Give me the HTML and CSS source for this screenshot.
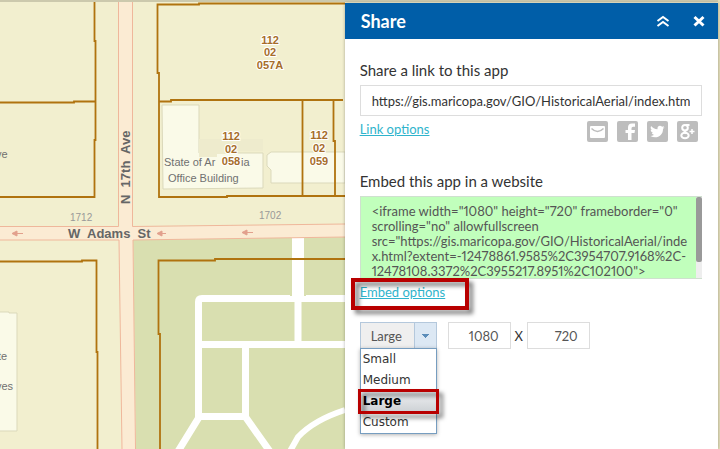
FILE: index.html
```html
<!DOCTYPE html>
<html lang="en">
<head>
<meta charset="utf-8">
<title>Historical Aerial</title>
<link rel="stylesheet" href="styles.css">
</head>
<body>
<main class="viewer">
  <svg class="map" viewBox="0 0 720 449" preserveAspectRatio="xMidYMid slice" role="img" aria-label="Parcel map">
    <rect width="720" height="449" fill="#f2efcf"/>
    <path d="M133 240L345 237V449H136Z" fill="#d9dfb0"/>
    <g fill="#fafae8" stroke="#dbd9bb" stroke-width="1">
      <path d="M162 105h37v48h64v35l-100 1z"/>
      <path d="M199 153v4h18v-3h18v-3h28v-12H199z" fill="#eeebcd" stroke="none"/>
      <path d="M271 152h74v31h-74v-13l-4-4v-11z"/>
      <path d="M-1 312h10v1h8v118H-1z"/>
    </g>
    <g fill="none" stroke="#fff" stroke-width="7">
      <path d="M298 237V299M345 298.500H202Q198.500 298.500 198.500 302V418L177 453M199 344.500H345M298 298V344M245.500 345V417L271 453M199 416.500H246"/>
      <path d="M345 410Q314 420 298 437L289 453" stroke-width="6"/>
    </g>
    <rect x="291" y="237" width="14" height="60" fill="#fff"/>
    <path d="M291 238v58M305 238v58" stroke="#d9dfb0" stroke-width="2"/>
    <g fill="#fbebd3">
      <path d="M118.500 0H132V449H121Z"/>
      <path d="M0 227H132L345 224V237L132 240H0Z"/>
      <path d="M119 240H133L135.500 449H122Z"/>
    </g>
    <g fill="none" stroke="#efb79b">
      <path d="M118.500 0V226.500H0M132.500 0V226.500L345 224M0 240H119L122 449M345 237L133 240L135.500 449"/>
    </g>
    <g fill="none" stroke="#b0730f" stroke-width="1.800">
      <path d="M94.500 0V41H95.500V140H94.500V197H0M0 102.500H74V101.500H95"/>
      <path d="M345 3.500H199V4.500H157.500V73H159V197H227V196H345M159 101.500H171V100H343M302.500 100V196M333.500 100V141H335V196"/>
      <path d="M0 261.500H82V260.500H96.500V352H97.500V449"/>
      <path d="M345 259H215V260.500H158.500V334H160V449"/>
    </g>
    <g fill="#e2a08c" stroke="#e2a08c">
      <path d="M13 233.500H23M17 231v5l-5-2.500z"/>
      <path d="M158 233.500H166M162 231v5l-5-2.500z"/>
      <path d="M244 232.500H253M247 230v5l-5-2.500z"/>
    </g>
    <g class="place">
      <text x="164" y="166">State of Ar</text><text x="241" y="166">ia</text>
      <text x="168" y="182">Office Building</text>
      <text x="-4" y="158">ve</text><text x="-2" y="360">te</text><text x="-4" y="390">ves</text>
    </g>
    <g class="parcel">
      <text x="270" y="44">112</text><text x="270" y="56">02</text><text x="270" y="69">057A</text>
      <text x="319" y="139">112</text><text x="319" y="152">02</text><text x="319" y="165">059</text>
      <text x="231" y="140">112</text><text x="231" y="153">02</text><text x="231" y="165">058</text>
    </g>
    <g class="number"><text x="70" y="221">1712</text><text x="259" y="219">1702</text></g>
    <g class="street"><text x="68" y="238">W&#160; Adams&#160; St</text><text transform="translate(130 204) rotate(-90)">N&#160; 17th&#160; Ave</text></g>
    <rect width="720" height="2" fill="#ccc9ad"/>
    <path d="M719 0V449" stroke="#e3deba" stroke-width="2"/>
  </svg>

  <section class="panel" aria-labelledby="title">
    <header class="bar">
      <h1 id="title" class="title">Share</h1>
      <button class="tool" type="button" aria-label="Collapse">
        <svg viewBox="0 0 14 14"><path d="M1.500 7L7 3l5.500 4M1.500 12L7 8l5.500 4"/></svg>
      </button>
      <button class="tool" type="button" aria-label="Close">
        <svg class="cross" viewBox="0 0 14 14"><path d="M2.500 3l9 8.500M11.500 3l-9 8.500"/></svg>
      </button>
    </header>

    <div class="body">
      <label class="label" for="link">Share a link to this app</label>
      <input class="field link-field" id="link" type="text" value="https://gis.maricopa.gov/GIO/HistoricalAerial/index.html">
      <div class="row">
        <a class="options" href="#link">Link options</a>
        <div class="social">
          <button type="button" aria-label="Email"><svg viewBox="0 0 21 21"><rect width="21" height="21" rx="2" fill="#bdbdbd"/><rect x="3" y="5" width="15" height="12" rx="1" fill="#fff"/><path d="M4.500 7.500Q10.500 13.500 16.500 7.500" fill="none" stroke="#bdbdbd" stroke-width="1.500"/></svg></button>
          <button type="button" aria-label="Facebook"><svg viewBox="0 0 21 21"><rect width="21" height="21" rx="2" fill="#bdbdbd"/><path d="M11 19v-7H8.500V9H11V6.500Q11 2.500 15 2.500h3v3.200h-2q-1.500 0-1.500 1.500V9H18l-.5 3h-3v7z" fill="#fff"/></svg></button>
          <button type="button" aria-label="Twitter"><svg viewBox="0 0 21 21"><rect width="21" height="21" rx="2" fill="#bdbdbd"/><path d="M17.500 6.200l-1.600.5 1.200-1.600-1.900.7C12.700 3.600 10 5.500 10.500 8.200 7.800 8.100 5.600 6.900 4.100 5c-.9 1.600-.3 3.200.8 4.100l-1.200-.3c0 1.500 1 2.600 2.300 3l-1.200.1c.4 1.100 1.400 1.700 2.600 1.900-1.200.9-2.500 1.200-4 1.100 6 3.500 12.800-.2 12.600-7z" fill="#fff"/></svg></button>
          <button type="button" aria-label="Google Plus"><svg viewBox="0 0 21 21"><rect width="21" height="21" rx="2" fill="#bdbdbd"/><g fill="none" stroke="#fff" stroke-width="2"><ellipse cx="8" cy="6.800" rx="2.800" ry="2.800"/><path d="M9 4h3.500M9 9.500Q6 11 9 12.200"/><ellipse cx="8" cy="14.500" rx="3.700" ry="2.700"/><path d="M12.500 10.500h5M15 8v5" stroke-width="1.500"/></g></svg></button>
        </div>
      </div>

      <label class="label second" for="code">Embed this app in a website</label>
      <div class="code-box">
        <textarea class="field code" id="code" wrap="off" spellcheck="false">&lt;iframe width="1080" height="720" frameborder="0"
scrolling="no" allowfullscreen
src="https://gis.maricopa.gov/GIO/HistoricalAerial/inde
x.html?extent=-12478861.9585%2C3954707.9168%2C-
12478108.3372%2C3955217.8951%2C102100"&gt;
&lt;/iframe&gt;</textarea>
        <div class="track"><div class="thumb"></div></div>
      </div>
      <div class="row">
        <a class="options marked" href="#code">Embed options</a>
      </div>

      <div class="sizes">
        <div class="picker">
          <select class="size" aria-label="Size">
            <option>Small</option><option>Medium</option><option selected>Large</option><option>Custom</option>
          </select>
          <ul class="menu" role="listbox" aria-label="Sizes">
            <li role="option">Small</li>
            <li role="option">Medium</li>
            <li role="option" class="chosen marked" aria-selected="true">Large</li>
            <li role="option">Custom</li>
          </ul>
        </div>
        <input class="field number-field" type="text" value="1080" aria-label="Width">
        <span class="times">X</span>
        <input class="field number-field" type="text" value="720" aria-label="Height">
      </div>
    </div>
  </section>
</main>
</body>
</html>
```
FILE: styles.css
```css
* { box-sizing: border-box; }

body {
  margin: 0;
  font-family: Lato, sans-serif;
  font-variant-numeric: proportional-nums;
  color: #333;
}

.viewer {
  position: relative;
  display: flex;
  justify-content: flex-end;
  min-height: 100vh;
  padding: 3px 2px 0 0;
  overflow: hidden;
}

.map {
  position: absolute;
  inset: 0;
  width: 100%;
  height: 100%;
}

.map text { font-family: "Liberation Sans", sans-serif; }

.parcel text {
  font-size: 11px;
  font-weight: bold;
  text-anchor: middle;
  fill: #a66d2a;
  stroke: #fff;
  stroke-width: 2px;
  paint-order: stroke;
}

.place text { font-size: 11px; fill: #707070; }
.number text { font-size: 10px; fill: #999; }

.street text {
  font-size: 13px;
  font-weight: bold;
  fill: #666;
}

.panel {
  position: relative;
  width: 52%;
  background: #fff;
  box-shadow: 0 0 3px rgba(0, 0, 0, 0.3);
}

.bar {
  display: flex;
  align-items: center;
  gap: 22px;
  height: 36px;
  padding: 0 12px 0 16px;
  background: #005ea8;
  color: #fff;
}

.title {
  flex: 1;
  margin: 0;
  font-size: 18px;
  line-height: 24px;
}

button {
  padding: 0;
  border: 0;
  background: none;
}

.tool { width: 14px; height: 14px; }

.tool svg {
  display: block;
  fill: none;
  stroke: #fff;
  stroke-width: 2;
}

.tool .cross { stroke-width: 3; }

.body { padding: 20px 16px 16px 15px; }

.label {
  display: block;
  margin-bottom: 4px;
  font-size: 15px;
  line-height: 22px;
}

.second { margin-top: 28px; }

.field {
  display: block;
  border: 1px solid #ddd;
  border-radius: 0;
  outline: 0;
  background: #fff;
  font-family: inherit;
  font-size: 13px;
  font-variant-numeric: inherit;
  color: #333;
}

.link-field {
  width: 100%;
  height: 31px;
  padding: 0 11px;
}

.row {
  display: flex;
  justify-content: space-between;
  padding-top: 5px;
}

.options {
  font-size: 13px;
  line-height: 16px;
  color: #2fb4cc;
}

.social {
  display: flex;
  gap: 9px;
  padding-right: 4px;
}

.social svg {
  display: block;
  width: 21px;
  height: 21px;
}

.code-box { position: relative; }

.code {
  width: 100%;
  height: 83px;
  padding: 7px 6px 7px 11px;
  border-color: #cfe0cf;
  background: #c1ffbc;
  color: #555;
  line-height: 15px;
  resize: none;
  overflow: hidden;
}

.track {
  position: absolute;
  top: 1px;
  right: 0;
  bottom: 1px;
  width: 6px;
  background: #eee;
}

.thumb {
  height: 80%;
  border-radius: 2px;
  background: #999;
}

.marked { position: relative; }

.marked::after {
  content: "";
  position: absolute;
  inset: -6px -24px -10px -9px;
  border: 4px solid #b80000;
  filter: drop-shadow(4px 4px 2px rgba(0, 0, 0, 0.5));
}

.sizes {
  display: flex;
  align-items: center;
  margin-top: 22px;
}

.picker {
  position: relative;
  width: 77px;
  margin-right: 11px;
}

.size {
  display: block;
  width: 100%;
  height: 27px;
  padding: 0 10px;
  border: 1px solid #b4c8dc;
  border-radius: 0;
  appearance: none;
  background:
    conic-gradient(from -45deg at 50% 100%, #5b8db9 90deg, transparent 0) right 7px center / 8px 4px no-repeat,
    linear-gradient(#b4c8dc, #b4c8dc) right 21px top / 1px 100% no-repeat,
    linear-gradient(#dce8f4, #dce8f4) right top / 21px 100% no-repeat,
    #efefef;
  font-family: inherit;
  font-size: 13px;
  color: #555;
}

.menu {
  position: absolute;
  top: 26px;
  left: 0;
  width: 100%;
  margin: 0;
  padding: 0;
  border: 1px solid #769dc0;
  background: #fff;
  box-shadow: 0 1px 4px rgba(0, 0, 0, 0.3);
  list-style: none;
  font-family: "DejaVu Sans", sans-serif;
  font-size: 12px;
  line-height: 21px;
}

.menu li { padding-left: 2px; }

.menu .chosen {
  background: linear-gradient(#f0f1f3, #cdd1d5);
  color: #000;
  font-weight: bold;
}

.menu .chosen::after {
  inset: -2px -3px;
  border-width: 3px;
}

.number-field {
  width: 63px;
  height: 27px;
  padding: 0 11px;
  color: #555;
  text-align: right;
}

.times {
  width: 16px;
  font-size: 13px;
  text-align: center;
}
```
